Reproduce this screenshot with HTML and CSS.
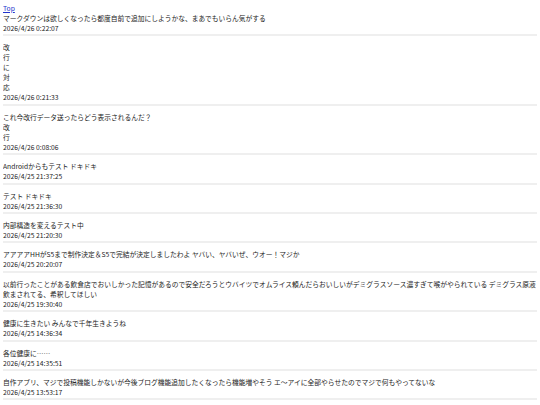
FILE: index.html
```html
<!DOCTYPE html>
<html lang="ja">
<head>
  <meta charset="UTF-8">
  <meta name="viewport" content="width=device-width, initial-scale=1.0">
  <title>Posts</title>
  <link rel="stylesheet" href="styles.css">
</head>
<body>
  <a class="top-link" href="#">Top</a>
  <div class="post-list">
    <div class="post">
      <div class="post-body">マークダウンは欲しくなったら都度自前で追加にしようかな、まあでもいらん気がする</div>
      <div class="post-date">2026/4/26 0:22:07</div>
    </div>
    <div class="post">
      <div class="post-body">改<br>行<br>に<br>対<br>応</div>
      <div class="post-date">2026/4/26 0:21:33</div>
    </div>
    <div class="post">
      <div class="post-body">これ今改行データ送ったらどう表示されるんだ？<br>改<br>行</div>
      <div class="post-date">2026/4/26 0:08:06</div>
    </div>
    <div class="post">
      <div class="post-body">Androidからもテスト ドキドキ</div>
      <div class="post-date">2026/4/25 21:37:25</div>
    </div>
    <div class="post">
      <div class="post-body">テスト ドキドキ</div>
      <div class="post-date">2026/4/25 21:36:30</div>
    </div>
    <div class="post">
      <div class="post-body">内部構造を変えるテスト中</div>
      <div class="post-date">2026/4/25 21:20:30</div>
    </div>
    <div class="post">
      <div class="post-body">アアアアHHがS5まで制作決定＆S5で完結が決定しましたわよ ヤバい、ヤバいぜ、ウオー！マジか</div>
      <div class="post-date">2026/4/25 20:20:07</div>
    </div>
    <div class="post">
      <div class="post-body">以前行ったことがある飲食店でおいしかった記憶があるので安全だろうとウバイツでオムライス頼んだらおいしいがデミグラスソース濃すぎて喉がやられている デミグラス原液飲まされてる、希釈してほしい</div>
      <div class="post-date">2026/4/25 19:30:40</div>
    </div>
    <div class="post">
      <div class="post-body">健康に生きたい みんなで千年生きようね</div>
      <div class="post-date">2026/4/25 14:36:34</div>
    </div>
    <div class="post">
      <div class="post-body">各位健康に……</div>
      <div class="post-date">2026/4/25 14:35:51</div>
    </div>
    <div class="post">
      <div class="post-body">自作アプリ、マジで投稿機能しかないが今後ブログ機能追加したくなったら機能増やそう エ〜アイに全部やらせたのでマジで何もやってないな</div>
      <div class="post-date">2026/4/25 13:53:17</div>
    </div>
  </div>
</body>
</html>
```

FILE: styles.css
```css
body {
  margin: 3px;
  font-family: "Noto Sans CJK JP", "Noto Sans", sans-serif;
  font-size: 6.75px;
  line-height: 10px;
  color: #222;
  background-color: #fff;
}

.top-link {
  color: #2233cc;
  text-decoration: underline;
}

.post {
  padding: 0 0 1.4px;
  border-bottom: 2px solid #efefef;
}

.post + .post {
  padding-top: 6px;
}

.post-body {
  word-break: break-all;
}
```
